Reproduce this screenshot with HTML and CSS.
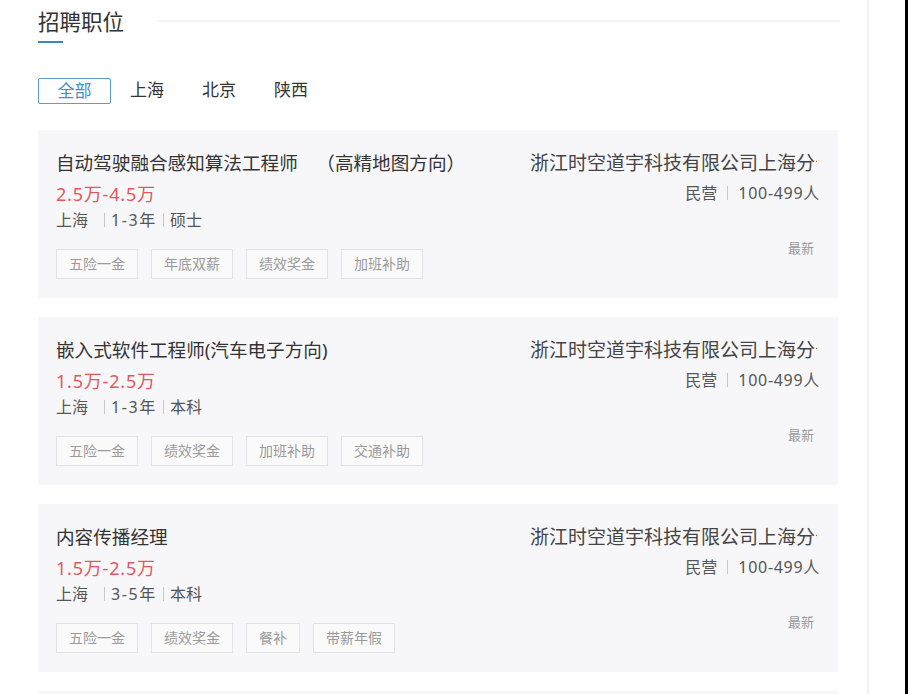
FILE: index.html
```html
<!DOCTYPE html>
<html lang="zh-CN">
<head>
<meta charset="utf-8">
<title>招聘职位</title>
<link rel="stylesheet" href="styles.css">
</head>
<body>
<div class="page">
  <div class="main">
    <div class="header">
      <div class="title-wrap">
        <div class="title">招聘职位</div>
        <div class="title-bar"></div>
      </div>
      <div class="header-line"></div>
    </div>

    <div class="tabs">
      <div class="tab active">全部</div>
      <div class="tab">上海</div>
      <div class="tab">北京</div>
      <div class="tab">陕西</div>
    </div>

    <div class="list">
      <div class="card">
        <div class="job">
          <div class="job-name">自动驾驶融合感知算法工程师&emsp;（高精地图方向）</div>
          <div class="salary">2.5万-4.5万</div>
          <div class="meta"><span class="first">上海</span><span class="sep"></span><span class="num">1-3年</span><span class="sep"></span><span>硕士</span></div>
          <div class="tags">
            <span class="tag">五险一金</span>
            <span class="tag">年底双薪</span>
            <span class="tag">绩效奖金</span>
            <span class="tag">加班补助</span>
          </div>
        </div>
        <div class="company">
          <div class="company-name">浙江时空道宇科技有限公司上海分公司</div>
          <div class="company-meta"><span>民营</span><span class="sep"></span><span class="num">100-499人</span></div>
          <div class="latest">最新</div>
        </div>
      </div>

      <div class="card">
        <div class="job">
          <div class="job-name">嵌入式软件工程师(汽车电子方向)</div>
          <div class="salary">1.5万-2.5万</div>
          <div class="meta"><span class="first">上海</span><span class="sep"></span><span class="num">1-3年</span><span class="sep"></span><span>本科</span></div>
          <div class="tags">
            <span class="tag">五险一金</span>
            <span class="tag">绩效奖金</span>
            <span class="tag">加班补助</span>
            <span class="tag">交通补助</span>
          </div>
        </div>
        <div class="company">
          <div class="company-name">浙江时空道宇科技有限公司上海分公司</div>
          <div class="company-meta"><span>民营</span><span class="sep"></span><span class="num">100-499人</span></div>
          <div class="latest">最新</div>
        </div>
      </div>

      <div class="card">
        <div class="job">
          <div class="job-name">内容传播经理</div>
          <div class="salary">1.5万-2.5万</div>
          <div class="meta"><span class="first">上海</span><span class="sep"></span><span class="num">3-5年</span><span class="sep"></span><span>本科</span></div>
          <div class="tags">
            <span class="tag">五险一金</span>
            <span class="tag">绩效奖金</span>
            <span class="tag">餐补</span>
            <span class="tag">带薪年假</span>
          </div>
        </div>
        <div class="company">
          <div class="company-name">浙江时空道宇科技有限公司上海分公司</div>
          <div class="company-meta"><span>民营</span><span class="sep"></span><span class="num">100-499人</span></div>
          <div class="latest">最新</div>
        </div>
      </div>

      <div class="card">
        <div class="job">
          <div class="job-name">&nbsp;</div>
        </div>
      </div>
    </div>
  </div>
  <div class="spacer"></div>
  <div class="edge"></div>
</div>
</body>
</html>
```

FILE: styles.css
```css
html, body {
  margin: 0;
  padding: 0;
  background: #ffffff;
}

body {
  font-family: "Noto Sans", "Noto Sans CJK SC", sans-serif;
  color: #333333;
  overflow: hidden;
}

.page {
  display: flex;
  width: 908px;
  height: 694px;
  overflow: hidden;
}

.main {
  width: 869px;
  box-sizing: border-box;
  padding-left: 38px;
  border-right: 2px solid #f2f2f4;
  flex-shrink: 0;
}

.spacer {
  flex: 1;
}

.edge {
  width: 3px;
  background: #000000;
  flex-shrink: 0;
}

/* header */
.header {
  display: flex;
  align-items: flex-start;
  height: 44px;
}

.title-wrap {
  display: flex;
  flex-direction: column;
}

.title {
  font-size: 21.5px;
  line-height: 30px;
  padding-top: 7px;
  color: #333333;
}

.title-bar {
  width: 25px;
  height: 2px;
  margin-top: 4px;
  background: #3a86bd;
}

.header-line {
  width: 682px;
  height: 2px;
  margin-top: 20px;
  margin-left: 34px;
  background: #f2f2f4;
}

/* tabs */
.tabs {
  display: flex;
  margin-top: 34px;
  height: 26px;
}

.tab {
  width: 72px;
  height: 26px;
  box-sizing: border-box;
  text-align: center;
  font-size: 17px;
  line-height: 24px;
  color: #333333;
}

.tab.active {
  width: 73px;
  border: 1px solid #5d9ccb;
  border-radius: 2px;
  color: #3f8fca;
}

/* cards */
.list {
  margin-top: 26px;
  display: flex;
  flex-direction: column;
  gap: 19px;
  width: 800px;
}

.card {
  display: flex;
  justify-content: space-between;
  height: 168px;
  box-sizing: border-box;
  padding: 20px 18px 0 18px;
  background: #f7f7fa;
  flex-shrink: 0;
}

.job {
  display: flex;
  flex-direction: column;
}

.job-name {
  font-size: 18.6px;
  line-height: 26px;
  color: #333333;
  white-space: nowrap;
}

.salary {
  margin-top: 5px;
  font-size: 18px;
  line-height: 26px;
  letter-spacing: 0.8px;
  color: #e2575d;
}

.meta {
  display: flex;
  align-items: center;
  font-size: 16px;
  line-height: 26px;
  color: #555555;
}

.meta .first {
  margin-right: 10px;
}

.meta .num {
  letter-spacing: 1.6px;
}

.sep {
  display: inline-block;
  width: 1px;
  height: 14px;
  margin: 0 6px;
  background: #c8c8c8;
}

.tags {
  display: flex;
  gap: 13px;
  margin-top: 16px;
}

.tag {
  display: inline-block;
  height: 30px;
  box-sizing: border-box;
  padding: 0 12px;
  border: 1px solid #e2e2e6;
  background: #fafafb;
  font-size: 14px;
  line-height: 28px;
  color: #9a9a9a;
}

.company {
  width: 290px;
  display: flex;
  flex-direction: column;
  align-items: flex-end;
}

.company-name {
  width: 287px;
  overflow: hidden;
  white-space: nowrap;
  font-size: 19px;
  line-height: 26px;
  color: #444444;
  align-self: flex-start;
}

.company-meta {
  display: flex;
  align-items: center;
  margin-top: 4px;
  font-size: 16px;
  line-height: 26px;
  color: #555555;
}

.company-meta .sep {
  margin: 0 10px;
}

.company-meta .num {
  letter-spacing: 0.7px;
}

.latest {
  margin-top: 32px;
  margin-right: 6px;
  font-size: 13px;
  line-height: 20px;
  color: #999999;
}
```
